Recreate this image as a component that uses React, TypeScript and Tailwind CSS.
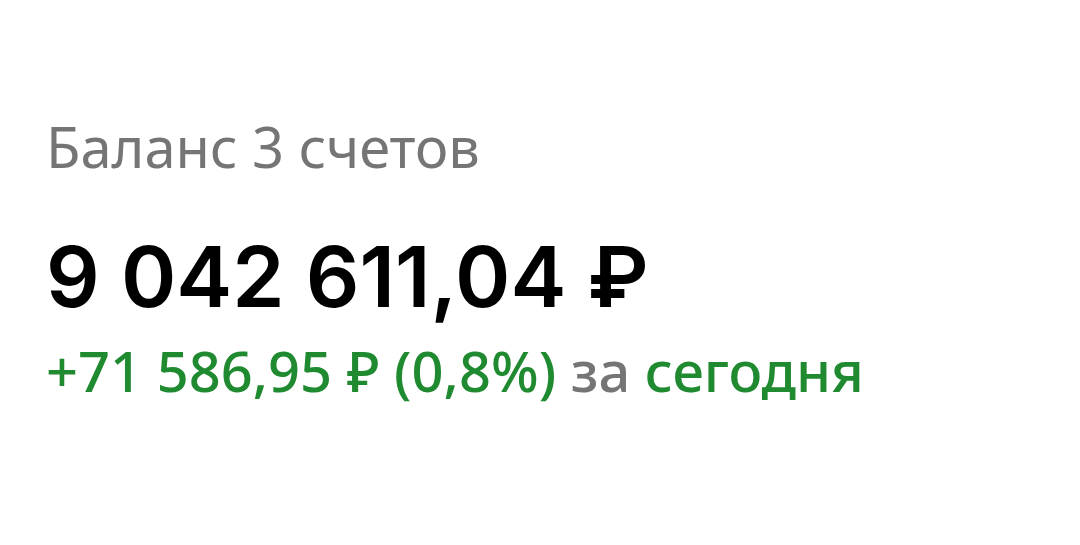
export default function App() {
  return (
    <div className="w-[1080px] h-[545px] bg-white px-[46px] pt-[112px] font-['Noto_Sans',sans-serif]">
      <div className="text-[56px] leading-[68px] text-[#757575]">Баланс 3 счетов</div>
      <div className="mt-[52px] text-[84px] leading-[90px] font-semibold text-black font-['Inter',sans-serif]">
        9 042 611,04 ₽
      </div>
      <div className="mt-[17px] text-[56px] leading-[62px] font-medium text-[#1f8a2f]">
        +71 586,95 ₽ (0,8%) <span className="text-[#757575]">за</span> сегодня
      </div>
    </div>
  );
}
